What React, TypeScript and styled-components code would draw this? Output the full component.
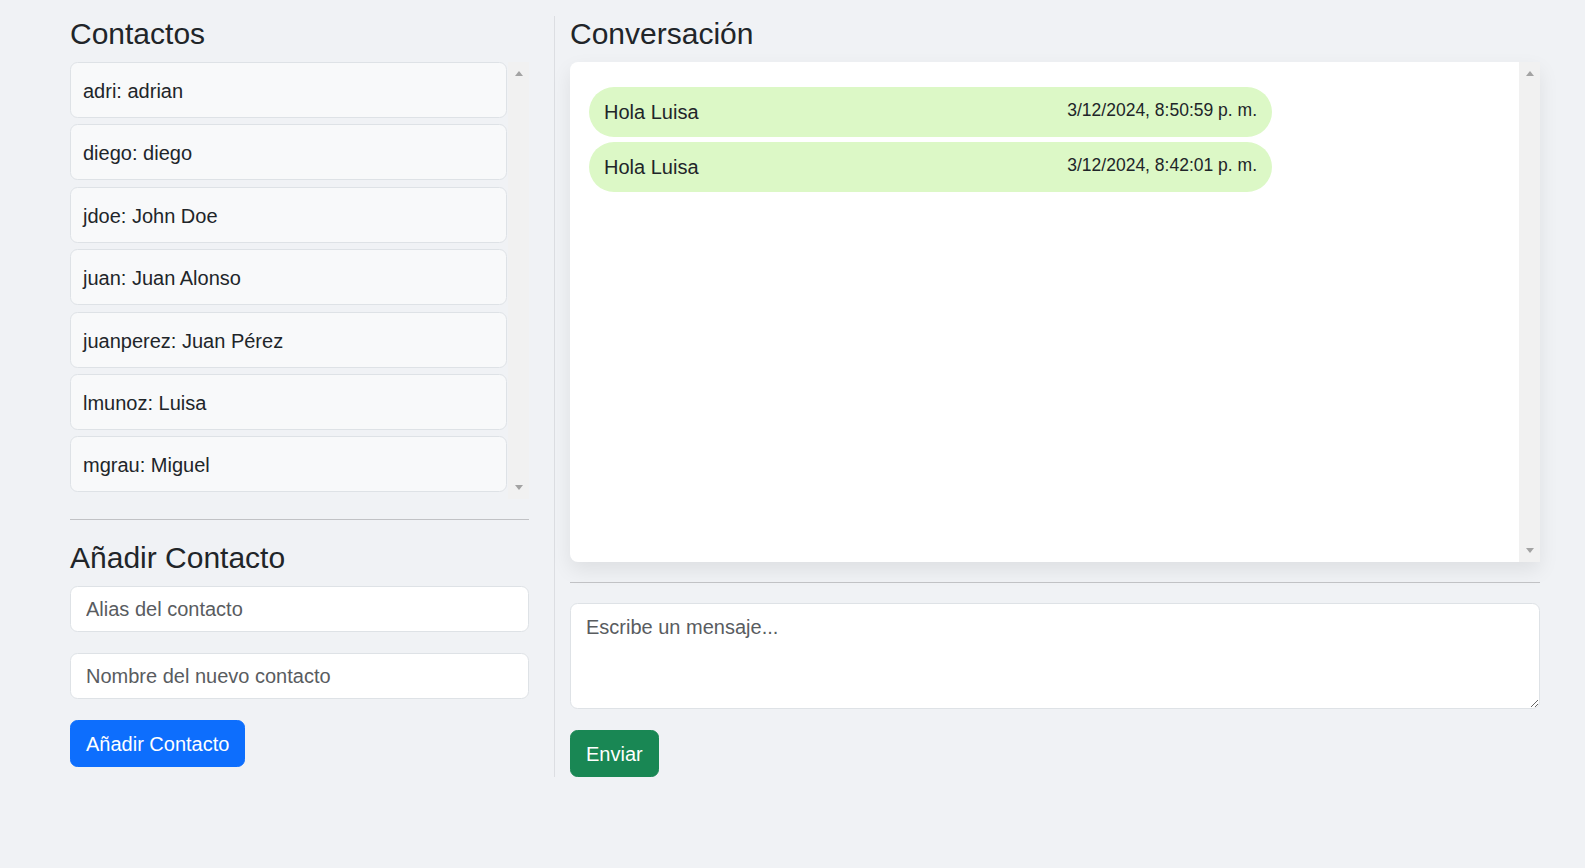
import styled, { createGlobalStyle } from 'styled-components';

const contacts = [
    { alias: 'adri', name: 'adrian' },
    { alias: 'diego', name: 'diego' },
    { alias: 'jdoe', name: 'John Doe' },
    { alias: 'juan', name: 'Juan Alonso' },
    { alias: 'juanperez', name: 'Juan Pérez' },
    { alias: 'lmunoz', name: 'Luisa' },
    { alias: 'mgrau', name: 'Miguel' },
];

const messages = [
    { text: 'Hola Luisa', date: '3/12/2024, 8:50:59 p. m.' },
    { text: 'Hola Luisa', date: '3/12/2024, 8:42:01 p. m.' },
];

const ScrollRail = () => (
    <StyledRail>
        <StyledArrow $up />
        <StyledArrow />
    </StyledRail>
);

export default function App() {
    return (
        <>
            <GlobalStyle />
            <StyledPage>
                <StyledSide>
                    <StyledHeading>Contactos</StyledHeading>
                    <StyledContactBox>
                        <StyledContactList>
                            {contacts.map((c) => (
                                <StyledContact key={c.alias}>
                                    {c.alias}: {c.name}
                                </StyledContact>
                            ))}
                        </StyledContactList>
                        <ScrollRail />
                    </StyledContactBox>
                    <StyledRule />
                    <StyledHeading>Añadir Contacto</StyledHeading>
                    <StyledInput placeholder="Alias del contacto" />
                    <StyledInput placeholder="Nombre del nuevo contacto" />
                    <StyledButton $color="#0d6efd">Añadir Contacto</StyledButton>
                </StyledSide>

                <StyledMain>
                    <StyledHeading>Conversación</StyledHeading>
                    <StyledChatBox>
                        <StyledMessages>
                            {messages.map((m, i) => (
                                <StyledBubble key={i}>
                                    <span>{m.text}</span>
                                    <StyledDate>{m.date}</StyledDate>
                                </StyledBubble>
                            ))}
                        </StyledMessages>
                        <ScrollRail />
                    </StyledChatBox>
                    <StyledRule />
                    <StyledTextarea rows={3} placeholder="Escribe un mensaje..." />
                    <StyledButton $color="#198754">Enviar</StyledButton>
                </StyledMain>
            </StyledPage>
        </>
    );
}

const GlobalStyle = createGlobalStyle`
    * {
        box-sizing: border-box;
    }
    body {
        margin: 0;
        background: #f0f2f5;
        color: #212529;
        font-family: "Liberation Sans", Arial, sans-serif;
        font-size: 20px;
        line-height: 30px;
    }
`;

const StyledPage = styled.div`
    display: grid;
    grid-template-columns: 485px 985px;
    padding: 16px 0 0 70px;
    min-height: 868px;
    align-items: stretch;
    align-content: start;
`;

const StyledSide = styled.div`
    display: flex;
    flex-direction: column;
    align-items: flex-start;
    padding-right: 25px;
    border-right: 1px solid #dcdee2;
`;

const StyledMain = styled.div`
    display: flex;
    flex-direction: column;
    align-items: flex-start;
    padding-left: 15px;
`;

const StyledHeading = styled.h4`
    margin: 0 0 10px;
    font-size: 30px;
    line-height: 36px;
    font-weight: 400;
`;

const StyledContactBox = styled.div`
    display: flex;
    gap: 1px;
    width: 100%;
    height: 437px;
`;

const StyledContactList = styled.div`
    flex: 1;
    display: flex;
    flex-direction: column;
    gap: 6.4px;
    overflow: hidden;
`;

const StyledContact = styled.div`
    flex: none;
    height: 56px;
    padding: 13px 12px 11px;
    background: #f8f9fa;
    border: 1px solid #dee2e6;
    border-radius: 7.5px;
`;

const StyledRail = styled.div`
    flex: none;
    width: 21px;
    display: flex;
    flex-direction: column;
    align-items: center;
    justify-content: space-between;
    padding: 9px 0;
    background: #f1f1f1;
`;

const StyledArrow = styled.span<{ $up?: boolean }>`
    width: 0;
    height: 0;
    border-left: 4.5px solid transparent;
    border-right: 4.5px solid transparent;
    ${(p) => (p.$up ? 'border-bottom' : 'border-top')}: 5px solid #a3a3a3;
`;

const StyledRule = styled.hr`
    align-self: stretch;
    margin: 20px 0;
    border: 0;
    border-top: 1px solid #c1c2c5;
`;

const StyledInput = styled.input`
    width: 100%;
    height: 46px;
    margin-bottom: 21px;
    padding: 7px 15px;
    background: #fff;
    border: 1px solid #dee2e6;
    border-radius: 7.5px;
    font: inherit;
    color: #212529;
    outline: none;

    &::placeholder {
        color: #595c5f;
    }
`;

const StyledButton = styled.button<{ $color: string }>`
    height: 47px;
    padding: 7.5px 15px;
    background: ${(p) => p.$color};
    border: 1px solid ${(p) => p.$color};
    border-radius: 7.5px;
    color: #fff;
    font: inherit;
    cursor: pointer;
`;

const StyledChatBox = styled.div`
    display: flex;
    width: 100%;
    height: 500px;
    background: #fff;
    border-radius: 8px 0 0 8px;
    box-shadow: 0 8px 20px rgba(0, 0, 0, 0.08);
`;

const StyledMessages = styled.div`
    flex: 1;
    padding: 20px 20px 20px 19px;
    overflow: hidden;
`;

const StyledBubble = styled.div`
    display: flex;
    justify-content: space-between;
    width: 683px;
    margin: 5px 0;
    padding: 10px 15px;
    background: #dcf8c6;
    border-radius: 25px;
`;

const StyledDate = styled.small`
    font-size: 17.5px;
    line-height: 26px;
`;

const StyledTextarea = styled.textarea`
    width: 100%;
    height: 106px;
    margin-bottom: 21px;
    padding: 7.5px 15px;
    background: #fff;
    border: 1px solid #dee2e6;
    border-radius: 7.5px;
    font: inherit;
    color: #212529;
    resize: vertical;
    outline: none;

    &::placeholder {
        color: #595c5f;
    }
`;
